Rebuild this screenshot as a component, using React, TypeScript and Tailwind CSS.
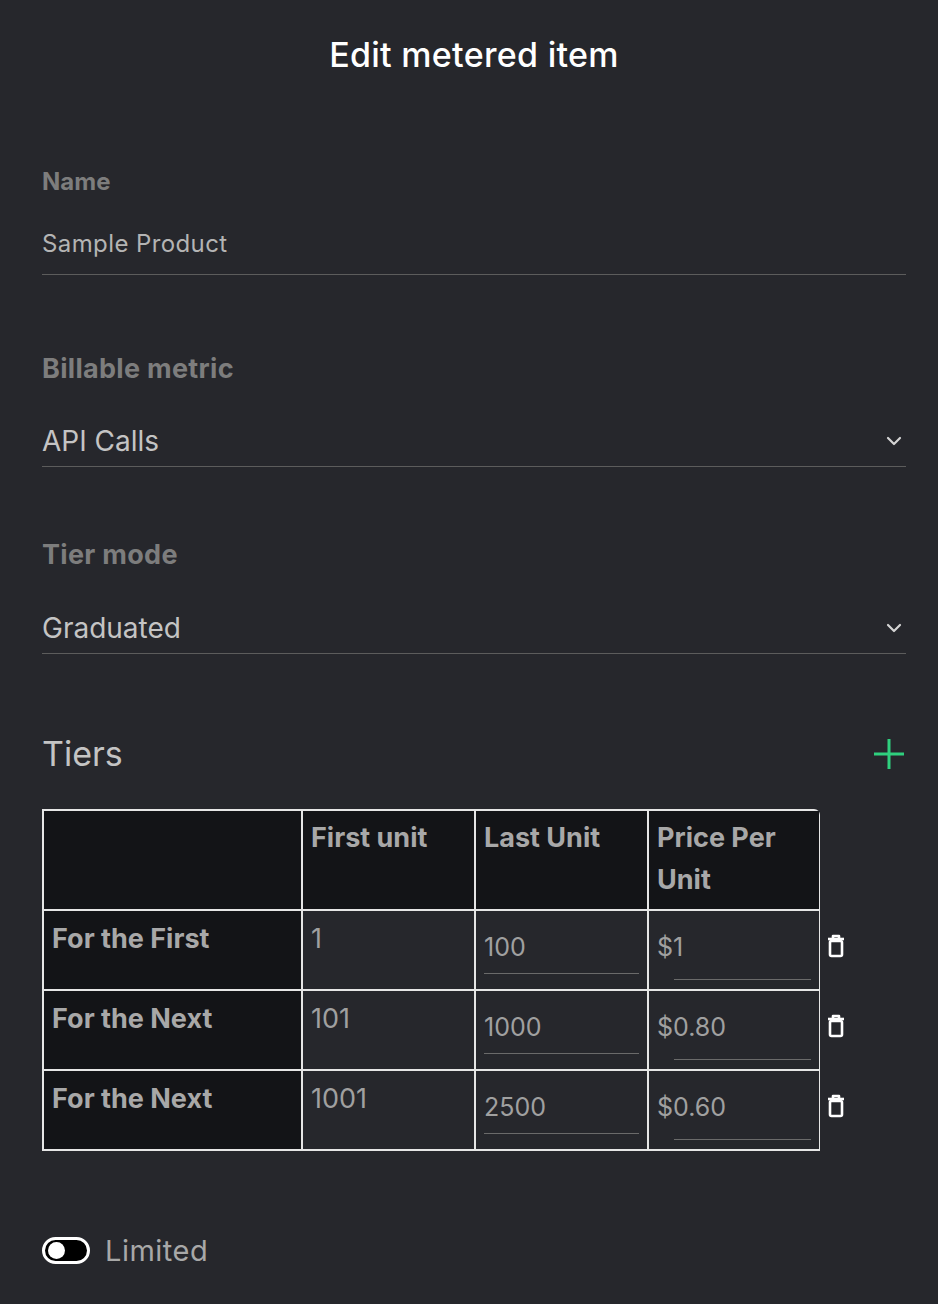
import React from "react";

const Chevron = () => (
  <svg width="24" height="24" viewBox="0 0 24 24" fill="none" stroke="#d4d4d4" strokeWidth="2.2" strokeLinecap="round" strokeLinejoin="round"><path d="M6 9l6 6 6-6" /></svg>
);
const Trash = () => (
  <svg width="20" height="26" viewBox="0 0 20 26" fill="none" stroke="#fff" strokeWidth="2.6" strokeLinejoin="round">
    <path d="M2 6h16" /><path d="M7 5V3h6v2" /><rect x="4" y="8" width="12" height="15" rx="1.5" />
  </svg>
);

const rows = [
  ["For the First", "1", "100", "$1"],
  ["For the Next", "101", "1000", "$0.80"],
  ["For the Next", "1001", "2500", "$0.60"],
];

export default function App() {
  return (
    <div className="w-[938px] h-[1304px] bg-[#26272c] pl-[42px] pr-[32px] text-[#b4b4b4]" style={{ fontFamily: "Inter, 'Noto Sans', sans-serif" }}>
      <h1 className="pt-[34px] text-center text-[34px] font-medium text-white leading-[42px] tracking-[0.3px]">Edit metered item</h1>
      <div className="mt-[88px] text-[24px] font-bold text-[#7d7d7d]">Name</div>
      <div className="mt-[26px] pb-[12px] border-b border-[#5c5c5c] text-[24px] text-[#b4b4b4] tracking-[0.4px]">Sample Product</div>

      <div className="mt-[74px] text-[27px] font-bold text-[#7d7d7d] tracking-[0.3px]">Billable metric</div>
      <div className="mt-[30px] pb-[4px] border-b border-[#5c5c5c] flex items-center justify-between text-[28px] text-[#c4c4c4]"><span>API Calls</span><Chevron /></div>

      <div className="mt-[68px] text-[27px] font-bold text-[#7d7d7d] tracking-[0.3px]">Tier mode</div>
      <div className="mt-[32px] pb-[4px] border-b border-[#5c5c5c] flex items-center justify-between text-[28px] text-[#c4c4c4]"><span>Graduated</span><Chevron /></div>

      <div className="mt-[74px] flex items-center justify-between">
        <span className="text-[34px] text-[#c4c4c4]">Tiers</span>
        <svg width="34" height="34" viewBox="0 0 34 34" stroke="#2fd07e" strokeWidth="3"><path d="M17 2v30M2 17h30" /></svg>
      </div>

      <div className="mt-[30px] flex items-start">
        <div className="grid grid-cols-[257px_171px_171px_170px] gap-[2px] bg-[#e6e6e6] p-[2px] rounded-tr-[6px] w-[778px]">
          <div className="bg-[#131417] h-[98px]" />
          {["First unit", "Last Unit", "Price Per Unit"].map((h) => (
            <div key={h} className="bg-[#131417] h-[98px] px-[8px] pt-[6px] text-[27px] font-bold leading-[42px] text-[#a8a8a8]">{h}</div>
          ))}
          {rows.map((r, i) => (
            <React.Fragment key={i}>
              <div className="bg-[#131417] h-[78px] px-[8px] pt-[8px] text-[27px] font-bold text-[#a8a8a8]">{r[0]}</div>
              <div className="bg-[#26272c] h-[78px] px-[8px] pt-[8px] text-[27px] text-[#a0a0a0]">{r[1]}</div>
              <div className="bg-[#26272c] h-[78px] px-[8px] pt-[18px]">
                <div className="border-b border-[#6a6a6a] pb-[6px] text-[25px] text-[#a0a0a0]">{r[2]}</div>
              </div>
              <div className="bg-[#26272c] h-[78px] pl-[8px] pr-[8px] pt-[18px] relative">
                <div className="text-[25px] text-[#a0a0a0] pb-[6px]">{r[3]}</div>
                <div className="absolute left-[25px] right-[8px] top-[68px] border-b border-[#6a6a6a]" />
              </div>
            </React.Fragment>
          ))}
        </div>
        <div className="flex flex-col pt-[124px] pl-[6px] gap-[54px]">
          <Trash /><Trash /><Trash />
        </div>
      </div>

      <div className="mt-[78px] flex items-center gap-[15px]">
        <div className="w-[48px] h-[27px] rounded-full bg-black border-[3px] border-white flex items-center pl-[3px]">
          <div className="w-[17px] h-[17px] rounded-full bg-white" />
        </div>
        <span className="text-[29px] text-[#a8a8a8] tracking-[0.5px]">Limited</span>
      </div>
    </div>
  );
}
